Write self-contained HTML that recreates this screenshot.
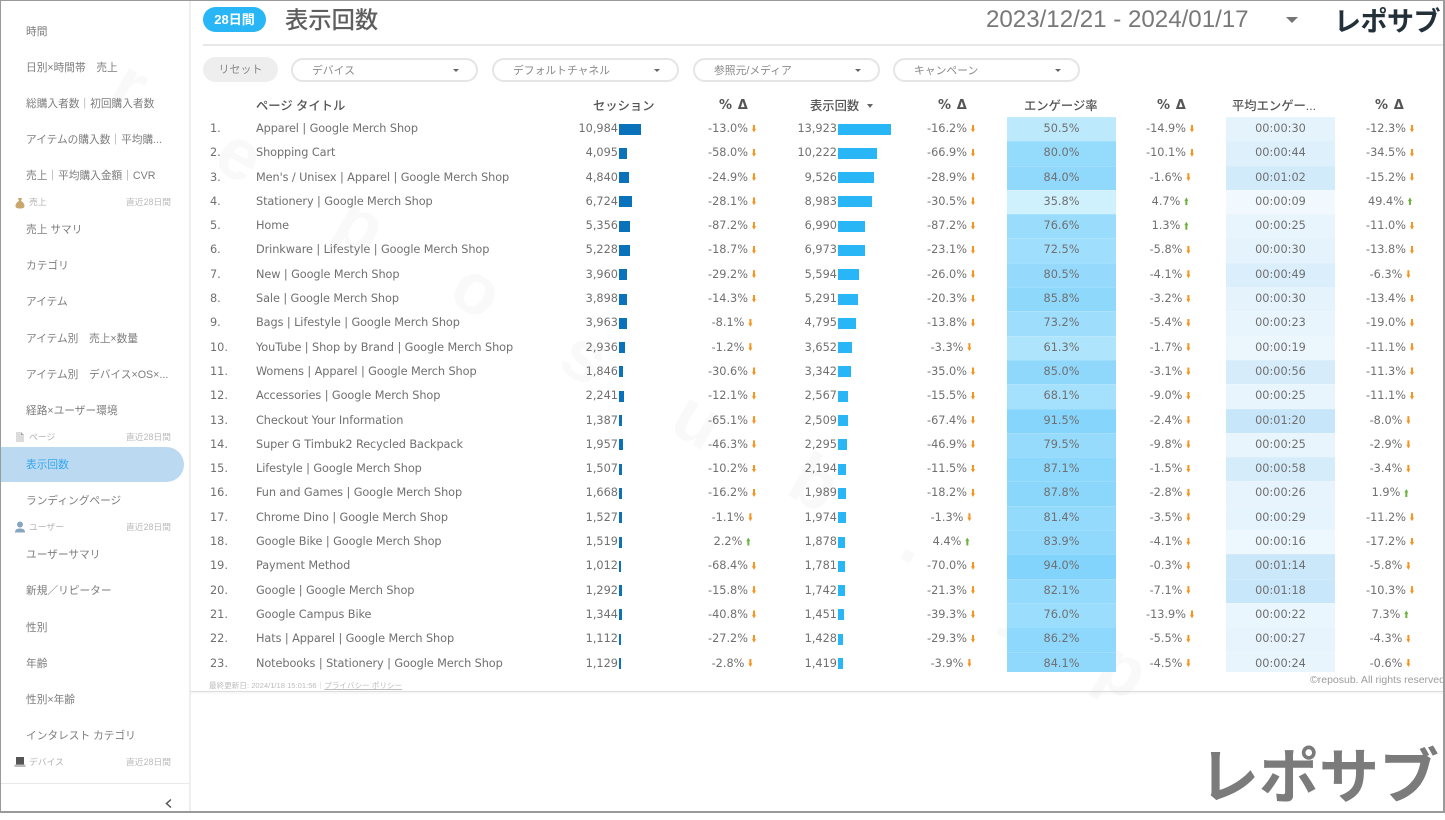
<!DOCTYPE html>
<html lang="ja">
<head>
<meta charset="utf-8">
<title>表示回数</title>
<style>
html,body{margin:0;padding:0;background:#fff}
body{width:1445px;height:813px;position:relative;overflow:hidden;font-family:"Liberation Sans","Noto Sans CJK JP",sans-serif}
.abs{position:absolute}
#frame{position:absolute;inset:0;border-style:solid;border-color:#9a9a9a;border-width:1px 2px 2px 1px;box-sizing:border-box;z-index:50;pointer-events:none}
.wm{position:absolute;color:#f9f9f9;font:700 72px/72px "Liberation Sans",sans-serif;transform:translate(-50%,-50%) rotate(30deg);z-index:1}
#side{position:absolute;left:0;top:0;width:189px;height:813px;border-right:2px solid #eee;z-index:2}
.si{position:absolute;left:26px;margin-top:1px;font-size:10.7px;line-height:16px;color:#7d7d7d;white-space:nowrap}
.sh{position:absolute;left:29px;font-size:8.8px;line-height:12px;color:#b2b2b2;white-space:nowrap}
.sd{position:absolute;left:126px;font-size:8.8px;line-height:12px;color:#b9b9b9;white-space:nowrap}
.ic{position:absolute;left:14px}
#active{position:absolute;left:1px;top:447px;width:183px;height:35px;background:#bcd9f2;border-radius:0 18px 18px 0}
.filter{position:absolute;top:58px;height:24px;width:187px;box-sizing:border-box;border:2px solid #e5e5e5;border-radius:13px;font-size:10.8px;line-height:22px;color:#8a8a8a;padding-left:19px;white-space:nowrap;z-index:3;background:#fff}
.filter::after{content:"";position:absolute;right:17px;top:9px;border:3px solid transparent;border-top:3.5px solid #666;border-bottom:0}
.h{position:absolute;top:97px;font-size:12.3px;line-height:18px;font-weight:500;color:#555;white-space:nowrap;z-index:3}
.pd{font-family:"DejaVu Sans",sans-serif;font-weight:700;font-size:13px;letter-spacing:.6px}
#rows{position:absolute;left:0;top:117px;width:1445px;height:555px;overflow:hidden;z-index:3;font:11.3px "DejaVu Sans",sans-serif;color:#707070}
.r{position:relative;height:24.3px;line-height:24.3px;white-space:nowrap}
.r span{position:absolute;top:0}
.n{left:210px}
.t{left:256px;letter-spacing:-.09px}
.s{left:540px;width:78px;text-align:right}
.v{left:760px;width:77px;text-align:right}
.a,.b{position:absolute;top:6.5px;height:11px;display:block}
.a{left:619px;background:#0a72bb}
.b{left:838px;background:#29b6f6}
.p1,.p2,.p3,.p4{width:100px;text-align:center}
.p1{left:682px}.p2{left:901px}.p3{left:1120px}.p4{left:1340px}
.e,.m{width:109px;height:24.3px;text-align:center;box-shadow:inset 0 1px 0 rgba(255,255,255,.14)}
.e{left:1007px}.m{left:1226px}
i{display:inline-block;width:4px;height:8px;margin-left:4px;vertical-align:-0.5px;clip-path:polygon(25% 0,75% 0,75% 55%,100% 55%,50% 100%,0 55%,25% 55%)}
i.d{background:#f7941e}
i.u{background:#6cb33f;clip-path:polygon(50% 0,100% 45%,75% 45%,75% 100%,25% 100%,25% 45%,0 45%)}
</style>
</head>
<body>
<div class="wm" style="left:130px;top:85px">r</div>
<div class="wm" style="left:240px;top:155px">e</div>
<div class="wm" style="left:360px;top:225px">p</div>
<div class="wm" style="left:477px;top:290px">o</div>
<div class="wm" style="left:585px;top:357px">s</div>
<div class="wm" style="left:698px;top:420px">u</div>
<div class="wm" style="left:815px;top:483px">b</div>
<div class="wm" style="left:917px;top:540px">.</div>
<div class="wm" style="left:1025px;top:605px">j</div>
<div class="wm" style="left:1123px;top:670px">p</div>

<div id="side">
<div id="active"></div>
<div class="si" style="top:23px">時間</div>
<div class="si" style="top:59px">日別×時間帯　売上</div>
<div class="si" style="top:95px">総購入者数｜初回購入者数</div>
<div class="si" style="top:131px">アイテムの購入数｜平均購...</div>
<div class="si" style="top:167px">売上｜平均購入金額｜CVR</div>
<svg class="ic" style="top:197px" width="12" height="12" viewBox="0 0 12 12"><path d="M4 1h4L7 4c2 1 3.500 3 3.500 5 0 2-2 2.500-4.500 2.500S1.500 11 1.500 9c0-2 1.500-4 3.500-5z" fill="#c9a66b"/></svg>
<div class="sh" style="top:196px">売上</div><div class="sd" style="top:196px">直近28日間</div>
<div class="si" style="top:221px">売上 サマリ</div>
<div class="si" style="top:257px">カテゴリ</div>
<div class="si" style="top:293px">アイテム</div>
<div class="si" style="top:330px">アイテム別　売上×数量</div>
<div class="si" style="top:366px">アイテム別　デバイス×OS×...</div>
<div class="si" style="top:402px">経路×ユーザー環境</div>
<svg class="ic" style="top:431px" width="12" height="12" viewBox="0 0 12 12"><path d="M2 1h5l3 3v7H2z" fill="#dcdcdc"/><path d="M7 1l3 3H7z" fill="#aaa"/></svg>
<div class="sh" style="top:431px">ページ</div><div class="sd" style="top:431px">直近28日間</div>
<div class="si" style="top:456px;color:#33a6ee">表示回数</div>
<div class="si" style="top:492px">ランディングページ</div>
<svg class="ic" style="top:521px" width="12" height="12" viewBox="0 0 12 12"><circle cx="6" cy="3.500" r="3" fill="#86a5c0"/><path d="M1 11.500c0-3 2-4 5-4s5 1 5 4z" fill="#86a5c0"/></svg>
<div class="sh" style="top:521px">ユーザー</div><div class="sd" style="top:521px">直近28日間</div>
<div class="si" style="top:546px">ユーザーサマリ</div>
<div class="si" style="top:582px">新規／リピーター</div>
<div class="si" style="top:619px">性別</div>
<div class="si" style="top:655px">年齢</div>
<div class="si" style="top:691px">性別×年齢</div>
<div class="si" style="top:727px">インタレスト カテゴリ</div>
<svg class="ic" style="top:756px" width="12" height="12" viewBox="0 0 12 12"><rect x="2" y="1" width="8" height="7.500" fill="#555"/><rect x="0.500" y="8.500" width="11" height="2.500" fill="#bbb"/></svg>
<div class="sh" style="top:756px">デバイス</div><div class="sd" style="top:756px">直近28日間</div>
<div class="abs" style="left:1px;top:783px;width:188px;height:1px;background:#e8e8e8"></div>
<svg class="abs" style="left:164px;top:798px" width="9" height="11" viewBox="0 0 9 11"><path d="M7 1.500L2.500 5.500 7 9.500" fill="none" stroke="#555" stroke-width="1.500"/></svg>
</div>

<div class="abs" style="left:203px;top:7px;width:63px;height:25px;border-radius:13px;background:#29b6f6;color:#fff;font-size:13px;font-weight:700;line-height:25px;text-align:center;z-index:3">28日間</div>
<div class="abs" style="left:285px;top:3px;font-size:23.3px;line-height:34px;font-weight:500;color:#5f5f5f;z-index:3">表示回数</div>
<div class="abs" style="left:986px;top:6px;font-size:24.1px;line-height:28px;color:#787878;white-space:nowrap;z-index:3">2023/12/21 - 2024/01/17</div>
<div class="abs" style="left:1286px;top:17px;border:6px solid transparent;border-top:6px solid #747474;border-bottom:0;z-index:3"></div>
<div class="abs" style="left:1334px;top:3px;font-size:27px;line-height:38px;font-weight:700;color:#22303a;white-space:nowrap;letter-spacing:-.5px;z-index:3">レポサブ</div>
<div class="abs" style="left:203px;top:44px;width:1242px;height:2px;background:#e8e8e8;z-index:3"></div>

<div class="abs" style="left:203px;top:57px;width:75px;height:25px;border-radius:13px;background:#eee;color:#8a8a8a;font-size:11px;line-height:27px;text-align:center;z-index:3">リセット</div>
<div class="filter" style="left:291px">デバイス</div>
<div class="filter" style="left:492px">デフォルトチャネル</div>
<div class="filter" style="left:693px">参照元/メディア</div>
<div class="filter" style="left:893px">キャンペーン</div>

<div class="h" style="left:256px">ページ タイトル</div>
<div class="h" style="left:593px">セッション</div>
<div class="h pd" style="left:719px">% Δ</div>
<div class="h" style="left:810px">表示回数</div>
<div class="abs" style="left:867px;top:104px;border:3px solid transparent;border-top:4px solid #666;border-bottom:0;z-index:3"></div>
<div class="h pd" style="left:938px">% Δ</div>
<div class="h" style="left:1024px">エンゲージ率</div>
<div class="h pd" style="left:1157px">% Δ</div>
<div class="h" style="left:1232px">平均エンゲー...</div>
<div class="h pd" style="left:1375px">% Δ</div>

<div id="rows">
<div class="r"><span class="n">1.</span><span class="t">Apparel | Google Merch Shop</span><span class="s">10,984</span><u class="a" style="width:22px"></u><span class="p1">-13.0%<i class="d"></i></span><span class="v">13,923</span><u class="b" style="width:53px"></u><span class="p2">-16.2%<i class="d"></i></span><span class="e" style="background:rgb(188,233,252)">50.5%</span><span class="p3">-14.9%<i class="d"></i></span><span class="m" style="background:rgb(229,243,253)">00:00:30</span><span class="p4">-12.3%<i class="d"></i></span></div>
<div class="r"><span class="n">2.</span><span class="t">Shopping Cart</span><span class="s">4,095</span><u class="a" style="width:8.2px"></u><span class="p1">-58.0%<i class="d"></i></span><span class="v">10,222</span><u class="b" style="width:38.9px"></u><span class="p2">-66.9%<i class="d"></i></span><span class="e" style="background:rgb(149,219,252)">80.0%</span><span class="p3">-10.1%<i class="d"></i></span><span class="m" style="background:rgb(221,240,252)">00:00:44</span><span class="p4">-34.5%<i class="d"></i></span></div>
<div class="r"><span class="n">3.</span><span class="t">Men's / Unisex | Apparel | Google Merch Shop</span><span class="s">4,840</span><u class="a" style="width:9.7px"></u><span class="p1">-24.9%<i class="d"></i></span><span class="v">9,526</span><u class="b" style="width:36.2px"></u><span class="p2">-28.9%<i class="d"></i></span><span class="e" style="background:rgb(144,217,252)">84.0%</span><span class="p3">-1.6%<i class="d"></i></span><span class="m" style="background:rgb(210,235,251)">00:01:02</span><span class="p4">-15.2%<i class="d"></i></span></div>
<div class="r"><span class="n">4.</span><span class="t">Stationery | Google Merch Shop</span><span class="s">6,724</span><u class="a" style="width:13.4px"></u><span class="p1">-28.1%<i class="d"></i></span><span class="v">8,983</span><u class="b" style="width:34.1px"></u><span class="p2">-30.5%<i class="d"></i></span><span class="e" style="background:rgb(207,240,253)">35.8%</span><span class="p3">4.7%<i class="u"></i></span><span class="m" style="background:rgb(241,249,254)">00:00:09</span><span class="p4">49.4%<i class="u"></i></span></div>
<div class="r"><span class="n">5.</span><span class="t">Home</span><span class="s">5,356</span><u class="a" style="width:10.7px"></u><span class="p1">-87.2%<i class="d"></i></span><span class="v">6,990</span><u class="b" style="width:26.6px"></u><span class="p2">-87.2%<i class="d"></i></span><span class="e" style="background:rgb(154,220,252)">76.6%</span><span class="p3">1.3%<i class="u"></i></span><span class="m" style="background:rgb(232,245,253)">00:00:25</span><span class="p4">-11.0%<i class="d"></i></span></div>
<div class="r"><span class="n">6.</span><span class="t">Drinkware | Lifestyle | Google Merch Shop</span><span class="s">5,228</span><u class="a" style="width:10.5px"></u><span class="p1">-18.7%<i class="d"></i></span><span class="v">6,973</span><u class="b" style="width:26.5px"></u><span class="p2">-23.1%<i class="d"></i></span><span class="e" style="background:rgb(159,222,252)">72.5%</span><span class="p3">-5.8%<i class="d"></i></span><span class="m" style="background:rgb(229,243,253)">00:00:30</span><span class="p4">-13.8%<i class="d"></i></span></div>
<div class="r"><span class="n">7.</span><span class="t">New | Google Merch Shop</span><span class="s">3,960</span><u class="a" style="width:7.9px"></u><span class="p1">-29.2%<i class="d"></i></span><span class="v">5,594</span><u class="b" style="width:21.3px"></u><span class="p2">-26.0%<i class="d"></i></span><span class="e" style="background:rgb(149,218,252)">80.5%</span><span class="p3">-4.1%<i class="d"></i></span><span class="m" style="background:rgb(218,238,252)">00:00:49</span><span class="p4">-6.3%<i class="d"></i></span></div>
<div class="r"><span class="n">8.</span><span class="t">Sale | Google Merch Shop</span><span class="s">3,898</span><u class="a" style="width:7.8px"></u><span class="p1">-14.3%<i class="d"></i></span><span class="v">5,291</span><u class="b" style="width:20.1px"></u><span class="p2">-20.3%<i class="d"></i></span><span class="e" style="background:rgb(142,216,252)">85.8%</span><span class="p3">-3.2%<i class="d"></i></span><span class="m" style="background:rgb(229,243,253)">00:00:30</span><span class="p4">-13.4%<i class="d"></i></span></div>
<div class="r"><span class="n">9.</span><span class="t">Bags | Lifestyle | Google Merch Shop</span><span class="s">3,963</span><u class="a" style="width:7.9px"></u><span class="p1">-8.1%<i class="d"></i></span><span class="v">4,795</span><u class="b" style="width:18.2px"></u><span class="p2">-13.8%<i class="d"></i></span><span class="e" style="background:rgb(158,222,252)">73.2%</span><span class="p3">-5.4%<i class="d"></i></span><span class="m" style="background:rgb(233,245,253)">00:00:23</span><span class="p4">-19.0%<i class="d"></i></span></div>
<div class="r"><span class="n">10.</span><span class="t">YouTube | Shop by Brand | Google Merch Shop</span><span class="s">2,936</span><u class="a" style="width:5.9px"></u><span class="p1">-1.2%<i class="d"></i></span><span class="v">3,652</span><u class="b" style="width:13.9px"></u><span class="p2">-3.3%<i class="d"></i></span><span class="e" style="background:rgb(174,228,252)">61.3%</span><span class="p3">-1.7%<i class="d"></i></span><span class="m" style="background:rgb(235,246,253)">00:00:19</span><span class="p4">-11.1%<i class="d"></i></span></div>
<div class="r"><span class="n">11.</span><span class="t">Womens | Apparel | Google Merch Shop</span><span class="s">1,846</span><u class="a" style="width:3.7px"></u><span class="p1">-30.6%<i class="d"></i></span><span class="v">3,342</span><u class="b" style="width:12.7px"></u><span class="p2">-35.0%<i class="d"></i></span><span class="e" style="background:rgb(143,216,252)">85.0%</span><span class="p3">-3.1%<i class="d"></i></span><span class="m" style="background:rgb(214,236,251)">00:00:56</span><span class="p4">-11.3%<i class="d"></i></span></div>
<div class="r"><span class="n">12.</span><span class="t">Accessories | Google Merch Shop</span><span class="s">2,241</span><u class="a" style="width:4.5px"></u><span class="p1">-12.1%<i class="d"></i></span><span class="v">2,567</span><u class="b" style="width:9.8px"></u><span class="p2">-15.5%<i class="d"></i></span><span class="e" style="background:rgb(165,224,252)">68.1%</span><span class="p3">-9.0%<i class="d"></i></span><span class="m" style="background:rgb(232,245,253)">00:00:25</span><span class="p4">-11.1%<i class="d"></i></span></div>
<div class="r"><span class="n">13.</span><span class="t">Checkout Your Information</span><span class="s">1,387</span><u class="a" style="width:2.8px"></u><span class="p1">-65.1%<i class="d"></i></span><span class="v">2,509</span><u class="b" style="width:9.5px"></u><span class="p2">-67.4%<i class="d"></i></span><span class="e" style="background:rgb(134,213,252)">91.5%</span><span class="p3">-2.4%<i class="d"></i></span><span class="m" style="background:rgb(200,230,250)">00:01:20</span><span class="p4">-8.0%<i class="d"></i></span></div>
<div class="r"><span class="n">14.</span><span class="t">Super G Timbuk2 Recycled Backpack</span><span class="s">1,957</span><u class="a" style="width:3.9px"></u><span class="p1">-46.3%<i class="d"></i></span><span class="v">2,295</span><u class="b" style="width:8.7px"></u><span class="p2">-46.9%<i class="d"></i></span><span class="e" style="background:rgb(150,219,252)">79.5%</span><span class="p3">-9.8%<i class="d"></i></span><span class="m" style="background:rgb(232,245,253)">00:00:25</span><span class="p4">-2.9%<i class="d"></i></span></div>
<div class="r"><span class="n">15.</span><span class="t">Lifestyle | Google Merch Shop</span><span class="s">1,507</span><u class="a" style="width:3px"></u><span class="p1">-10.2%<i class="d"></i></span><span class="v">2,194</span><u class="b" style="width:8.3px"></u><span class="p2">-11.5%<i class="d"></i></span><span class="e" style="background:rgb(140,215,252)">87.1%</span><span class="p3">-1.5%<i class="d"></i></span><span class="m" style="background:rgb(213,236,251)">00:00:58</span><span class="p4">-3.4%<i class="d"></i></span></div>
<div class="r"><span class="n">16.</span><span class="t">Fun and Games | Google Merch Shop</span><span class="s">1,668</span><u class="a" style="width:3.3px"></u><span class="p1">-16.2%<i class="d"></i></span><span class="v">1,989</span><u class="b" style="width:7.6px"></u><span class="p2">-18.2%<i class="d"></i></span><span class="e" style="background:rgb(139,215,252)">87.8%</span><span class="p3">-2.8%<i class="d"></i></span><span class="m" style="background:rgb(231,244,253)">00:00:26</span><span class="p4">1.9%<i class="u"></i></span></div>
<div class="r"><span class="n">17.</span><span class="t">Chrome Dino | Google Merch Shop</span><span class="s">1,527</span><u class="a" style="width:3.1px"></u><span class="p1">-1.1%<i class="d"></i></span><span class="v">1,974</span><u class="b" style="width:7.5px"></u><span class="p2">-1.3%<i class="d"></i></span><span class="e" style="background:rgb(147,218,252)">81.4%</span><span class="p3">-3.5%<i class="d"></i></span><span class="m" style="background:rgb(229,244,253)">00:00:29</span><span class="p4">-11.2%<i class="d"></i></span></div>
<div class="r"><span class="n">18.</span><span class="t">Google Bike | Google Merch Shop</span><span class="s">1,519</span><u class="a" style="width:3px"></u><span class="p1">2.2%<i class="u"></i></span><span class="v">1,878</span><u class="b" style="width:7.1px"></u><span class="p2">4.4%<i class="u"></i></span><span class="e" style="background:rgb(144,217,252)">83.9%</span><span class="p3">-4.1%<i class="d"></i></span><span class="m" style="background:rgb(237,247,254)">00:00:16</span><span class="p4">-17.2%<i class="d"></i></span></div>
<div class="r"><span class="n">19.</span><span class="t">Payment Method</span><span class="s">1,012</span><u class="a" style="width:2px"></u><span class="p1">-68.4%<i class="d"></i></span><span class="v">1,781</span><u class="b" style="width:6.8px"></u><span class="p2">-70.0%<i class="d"></i></span><span class="e" style="background:rgb(131,212,252)">94.0%</span><span class="p3">-0.3%<i class="d"></i></span><span class="m" style="background:rgb(203,232,250)">00:01:14</span><span class="p4">-5.8%<i class="d"></i></span></div>
<div class="r"><span class="n">20.</span><span class="t">Google | Google Merch Shop</span><span class="s">1,292</span><u class="a" style="width:2.6px"></u><span class="p1">-15.8%<i class="d"></i></span><span class="v">1,742</span><u class="b" style="width:6.6px"></u><span class="p2">-21.3%<i class="d"></i></span><span class="e" style="background:rgb(147,218,252)">82.1%</span><span class="p3">-7.1%<i class="d"></i></span><span class="m" style="background:rgb(201,231,250)">00:01:18</span><span class="p4">-10.3%<i class="d"></i></span></div>
<div class="r"><span class="n">21.</span><span class="t">Google Campus Bike</span><span class="s">1,344</span><u class="a" style="width:2.7px"></u><span class="p1">-40.8%<i class="d"></i></span><span class="v">1,451</span><u class="b" style="width:5.5px"></u><span class="p2">-39.3%<i class="d"></i></span><span class="e" style="background:rgb(154,221,252)">76.0%</span><span class="p3">-13.9%<i class="d"></i></span><span class="m" style="background:rgb(233,246,253)">00:00:22</span><span class="p4">7.3%<i class="u"></i></span></div>
<div class="r"><span class="n">22.</span><span class="t">Hats | Apparel | Google Merch Shop</span><span class="s">1,112</span><u class="a" style="width:2.2px"></u><span class="p1">-27.2%<i class="d"></i></span><span class="v">1,428</span><u class="b" style="width:5.4px"></u><span class="p2">-29.3%<i class="d"></i></span><span class="e" style="background:rgb(141,216,252)">86.2%</span><span class="p3">-5.5%<i class="d"></i></span><span class="m" style="background:rgb(231,244,253)">00:00:27</span><span class="p4">-4.3%<i class="d"></i></span></div>
<div class="r"><span class="n">23.</span><span class="t">Notebooks | Stationery | Google Merch Shop</span><span class="s">1,129</span><u class="a" style="width:2.3px"></u><span class="p1">-2.8%<i class="d"></i></span><span class="v">1,419</span><u class="b" style="width:5.4px"></u><span class="p2">-3.9%<i class="d"></i></span><span class="e" style="background:rgb(144,217,252)">84.1%</span><span class="p3">-4.5%<i class="d"></i></span><span class="m" style="background:rgb(232,245,253)">00:00:24</span><span class="p4">-0.6%<i class="d"></i></span></div>
</div>

<div class="abs" style="left:209px;top:680px;font-size:7.6px;line-height:11px;color:#bcbcbc;white-space:nowrap;z-index:3">最終更新日: 2024/1/18 15:01:56｜<span style="text-decoration:underline">プライバシー ポリシー</span></div>
<div class="abs" style="left:1310px;top:673px;width:133px;overflow:hidden;font-size:10.5px;line-height:14px;color:#9c9c9c;white-space:nowrap;z-index:3">©reposub. All rights reserved</div>
<div class="abs" style="left:191px;top:691px;width:1254px;height:1px;background:#dcdcdc;box-shadow:0 1px 2px rgba(0,0,0,.1);z-index:3"></div>
<div class="abs" style="left:1199px;top:736px;font-size:60px;line-height:84px;font-weight:700;color:#7b7b7b;white-space:nowrap;z-index:3">レポサブ</div>
<div id="frame"></div>
</body>
</html>
